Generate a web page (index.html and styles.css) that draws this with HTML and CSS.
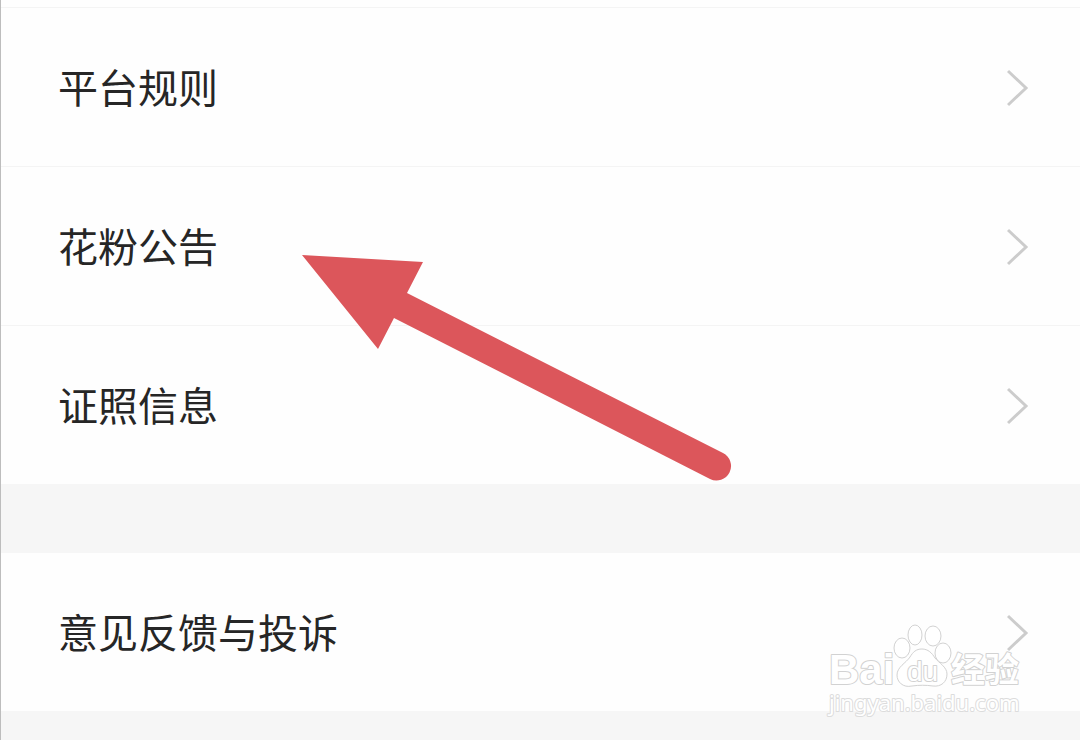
FILE: index.html
```html
<!DOCTYPE html>
<html lang="zh-CN">
<head>
    <meta charset="UTF-8">
    <meta name="viewport" content="width=device-width, initial-scale=1.0">
    <title>花粉公告</title>
    <link rel="stylesheet" href="styles.css">
</head>
<body>
    <main class="page">
        <nav class="group lined">
            <a class="row" href="#rules">
                <span class="label">平台规则</span>
                <svg class="chevron" viewBox="0 0 22 38" aria-hidden="true"><path d="M1 2l18 17L1 36"/></svg>
            </a>
            <a class="row" href="#notice">
                <span class="label">花粉公告</span>
                <svg class="chevron" viewBox="0 0 22 38" aria-hidden="true"><path d="M1 2l18 17L1 36"/></svg>
            </a>
            <a class="row" href="#license">
                <span class="label">证照信息</span>
                <svg class="chevron" viewBox="0 0 22 38" aria-hidden="true"><path d="M1 2l18 17L1 36"/></svg>
            </a>
        </nav>
        <nav class="group">
            <a class="row" href="#feedback">
                <span class="label">意见反馈与投诉</span>
                <svg class="chevron" viewBox="0 0 22 38" aria-hidden="true"><path d="M1 2l18 17L1 36"/></svg>
            </a>
        </nav>

        <!-- Arrow pointing at the notice row -->
        <svg class="arrow" viewBox="0 0 440 228" aria-hidden="true">
            <path d="M2 1L123 8L107 39L423 199A14 14 0 0 1 410 225L94 64L78 95Z"/>
        </svg>

        <!-- Watermark -->
        <svg class="watermark" viewBox="0 0 200 100">
            <text class="mark bold" x="5" y="64" font-size="42">Bai</text>
            <ellipse cx="78" cy="28" rx="8" ry="10"/>
            <ellipse cx="91" cy="15" rx="7" ry="10"/>
            <ellipse cx="109" cy="16" rx="8" ry="10"/>
            <ellipse cx="119" cy="33" rx="8" ry="10"/>
            <path d="M98 29C104 29 108 33 111 38C115 43 123 47 123 54C123 62 117 67 109 66C102 65 95 65 88 66C79 68 73 62 73 55C73 47 82 43 86 37C89 32 92 29 98 29Z"/>
            <text class="mark" x="83" y="61" font-size="28">du</text>
            <text class="mark bold" x="127" y="62" font-size="34">经验</text>
            <text class="mark url" x="5" y="91" font-size="22">jingyan.baidu.com</text>
        </svg>
    </main>
</body>
</html>
```
FILE: styles.css
```css
* {
    box-sizing: border-box;
}
body {
    margin: 0;
    background-color: #f6f6f6;
    font-family: "Noto Sans CJK SC", sans-serif;
    color: #262626;
}
.page {
    position: relative;
    display: flex;
    flex-direction: column;
    gap: 69px;
    min-height: 100vh;
    border-left: 1px solid #bdbdbd;
}
.group {
    background-color: #fefefe;
}
.row {
    display: flex;
    align-items: center;
    justify-content: space-between;
    height: 158px;
    padding: 2px 51px 0 57px;
    color: inherit;
    font-size: 40px;
    line-height: 60px;
    text-decoration: none;
}
.label {
    padding-bottom: 4px;
}
.lined {
    padding-top: 7px;
}
.lined .row {
    height: 159px;
    border-top: 1px solid #f4f4f4;
}
.chevron {
    width: 22px;
    height: 38px;
    fill: none;
    stroke: #cccccc;
    stroke-width: 3;
}
.arrow {
    position: absolute;
    top: 254px;
    left: 299px;
    width: 440px;
    height: 228px;
    fill: #dc565b;
}
.watermark {
    position: absolute;
    right: 56px;
    bottom: 20px;
    width: 200px;
    height: 100px;
    fill: #ffffff;
    stroke: #d2d2d2;
    stroke-width: 1;
}
.mark {
    font-family: "Liberation Sans", "Noto Sans CJK SC", sans-serif;
    stroke-width: 2;
    stroke-linejoin: round;
    paint-order: stroke;
}
.bold {
    font-weight: bold;
}
.url {
    font-family: "Noto Sans", sans-serif;
    stroke: #dcdcdc;
}
```
